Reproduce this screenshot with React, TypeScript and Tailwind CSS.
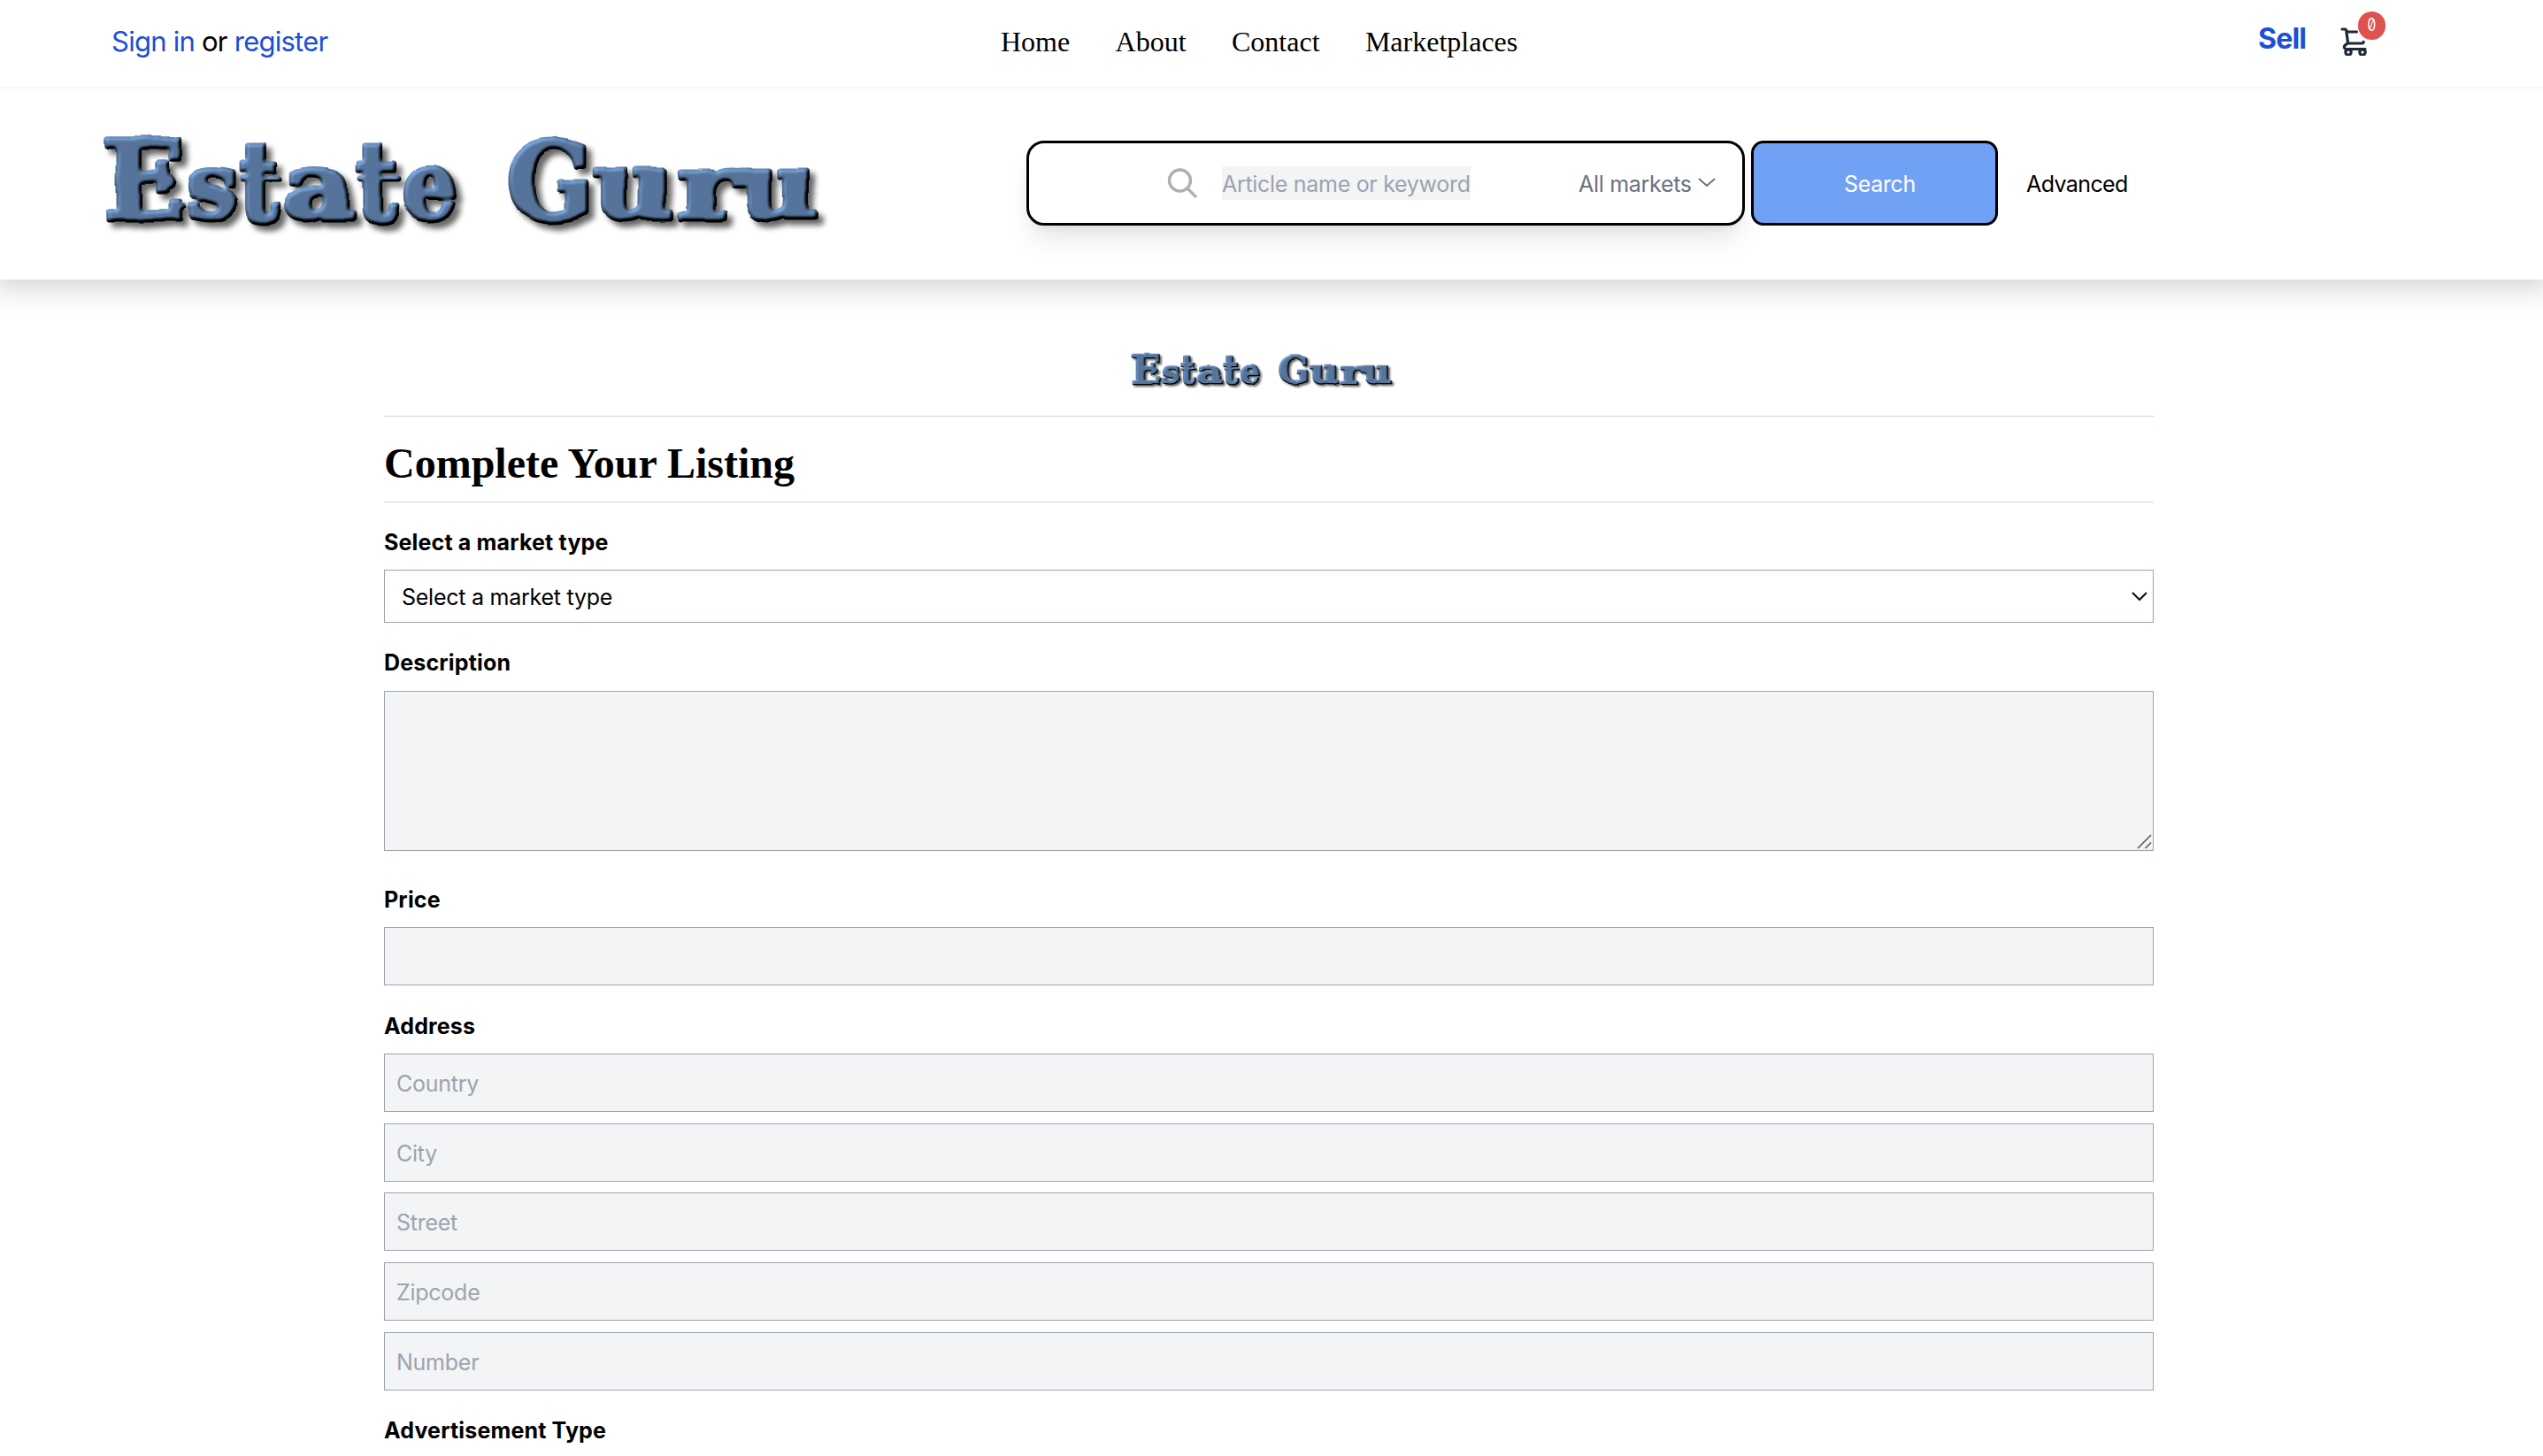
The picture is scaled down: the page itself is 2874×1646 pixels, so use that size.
import React from "react";

type Glyph = { c: string; x: number; y: number; w: number; size: number };

const glyphs: Glyph[] = [
  { c: "E", x: 5, y: 106, w: 92, size: 124 },
  { c: "s", x: 100, y: 105, w: 57, size: 101 },
  { c: "t", x: 158, y: 107, w: 46, size: 124 },
  { c: "a", x: 209, y: 105, w: 80, size: 101 },
  { c: "t", x: 290, y: 107, w: 48, size: 124 },
  { c: "e", x: 343, y: 105, w: 62, size: 103 },
  { c: "G", x: 461, y: 105, w: 98, size: 118 },
  { c: "u", x: 559, y: 105, w: 91, size: 103 },
  { c: "r", x: 654, y: 106, w: 72, size: 103 },
  { c: "u", x: 723, y: 105, w: 88, size: 103 },
];

function Logo({ id, className }: { id: string; className: string }) {
  return (
    <svg className={`overflow-visible ${className}`} viewBox="0 0 824 124" preserveAspectRatio="none" role="img" aria-label="Estate Guru">
      <defs>
        <filter id={id} x="-2%" y="-10%" width="104%" height="125%" colorInterpolationFilters="sRGB">
          <feTurbulence type="fractalNoise" baseFrequency="0.03" numOctaves={1} seed={4} result="noise" />
          <feDisplacementMap in="SourceGraphic" in2="noise" scale={8} xChannelSelector="R" yChannelSelector="G" result="rough" />
          <feColorMatrix in="rough" type="matrix" values="0 0 0 0 0  0 0 0 0 0  0 0 0 0 0  0 0 0 1 0" result="shape" />
          <feGaussianBlur in="shape" stdDeviation="2.2" result="height" />
          <feDiffuseLighting in="height" surfaceScale={6} diffuseConstant={1.15} lightingColor="#6a8fbe" result="light">
            <feDistantLight azimuth={235} elevation={45} />
          </feDiffuseLighting>
          <feComposite in="light" in2="shape" operator="in" result="face" />
          <feGaussianBlur in="shape" stdDeviation="3" result="soft" />
          <feOffset in="soft" dx={6} dy={6} result="drop" />
          <feComponentTransfer in="drop" result="shade">
            <feFuncA type="linear" slope={0.6} />
          </feComponentTransfer>
          <feMerge>
            <feMergeNode in="shade" />
            <feMergeNode in="face" />
          </feMerge>
        </filter>
      </defs>
      <g filter={`url(#${id})`} strokeWidth={7} strokeLinejoin="round" strokeLinecap="round" className="fill-[#57779f] stroke-[#57779f]">
        <text className="font-['DejaVu_Serif',serif] font-bold">
          {glyphs.map((g, i) => (
            <tspan key={i} x={g.x} y={g.y} fontSize={g.size} textLength={g.w} lengthAdjust="spacingAndGlyphs">
              {g.c}
            </tspan>
          ))}
        </text>
        <circle cx="77" cy="64" r="5" />
        <path d="M84 104L96 90M162 60H204M296 60H338" />
      </g>
    </svg>
  );
}

function CartIcon() {
  return (
    <svg className="h-8 w-8" viewBox="0 0 32 32" fill="none" stroke="#1f2937" strokeWidth={3.2} strokeLinecap="round" strokeLinejoin="round">
      <path d="M2 2h3c1 0 1.600.6 1.700 1.500L8.500 17.500L5 20.500c-1.500 1.500-.6 4 1.500 4H28" />
      <path d="M7.500 5H18.500M8.500 18H24.500c1 0 1.600-.5 1.700-1.600" />
      <circle cx="9" cy="28" r="3.200" />
      <circle cx="25" cy="28" r="3.200" />
    </svg>
  );
}

function Label({ children, className }: { children: React.ReactNode; className: string }) {
  return <label className={`block h-10 text-[25px] leading-10 font-bold tracking-[0.16px] ${className}`}>{children}</label>;
}

const fields = ["Country", "City", "Street", "Zipcode", "Number"];

export default function App() {
  return (
    <div className="h-[1646px] w-full overflow-hidden bg-white font-[Inter,sans-serif] text-black">
      <header className="h-[316px] bg-white shadow-[0_0_30px_10px_rgba(0,0,0,0.17)]">
        <div className="flex h-[100px] border-b-2 border-[#f5f5f5]">
          <div className="ml-[126px] h-[94px] w-[1005px] text-[31px] leading-[94px] tracking-[-0.75px]">
            <a className="text-[#1d4ed8]">Sign in</a> or <a className="text-[#1d4ed8]">register</a>
          </div>
          <nav className="flex w-[1421px] gap-[51.4px] font-['Liberation_Serif',serif] text-[32px] leading-[95px]">
            <a>Home</a>
            <a>About</a>
            <a>Contact</a>
            <a>Marketplaces</a>
          </nav>
          <a className="w-[93px] text-[32px] leading-[87px] font-bold tracking-[-0.8px] text-[#1d4ed8]">Sell</a>
          <div className="relative h-16 w-16 pt-[31px]">
            <CartIcon />
            <span className="absolute top-[13px] left-5 flex h-8 w-[31px] items-center justify-center rounded-full bg-[#e0524d] pb-[2px] text-[20px] text-white [font-feature-settings:'zero']">
              <span className="scale-x-80">0</span>
            </span>
          </div>
        </div>
        <div className="flex h-[214px] pt-[42px]">
          <Logo id="logo-large" className="ml-[112px] h-[124px] w-[824px]" />
          <div className="mt-[17px] ml-[224px] flex h-24 w-[812px] items-center rounded-[20px] border-3 border-black bg-white shadow-[0_20px_30px_-6px_rgba(0,0,0,0.1),0_8px_12px_-8px_rgba(0,0,0,0.1)]">
            <svg className="ml-[156px] h-9 w-9" viewBox="0 0 36 36" fill="none" stroke="#b0b0b0" strokeWidth={3.4}>
              <circle cx="14.500" cy="15" r="12" />
              <path d="M23 24L33 34" />
            </svg>
            <span className="ml-[26px] h-[38px] w-[281px] bg-gray-100 text-[25px] leading-[41px] tracking-[-0.3px] whitespace-nowrap text-[#9ca3af]">
              Article name or keyword
            </span>
            <span className="ml-[122px] h-[38px] w-[135px] text-[25px] leading-[41px] tracking-[-0.3px] whitespace-nowrap text-gray-500">All markets</span>
            <svg className="h-5 w-5" viewBox="0 0 20 20" fill="none" stroke="#6b7280" strokeWidth={2}>
              <path d="M1 5L10 13L19 5" />
            </svg>
          </div>
          <button className="mt-[17px] ml-[7px] h-24 w-[279px] rounded-[14px] border-3 border-black bg-[#71a1f5] pt-[3px] pl-3 text-[25px] tracking-[-0.3px] text-white">
            Search
          </button>
          <a className="mt-[17px] ml-8 text-[25px] leading-[98px] tracking-[-0.6px]">Advanced</a>
        </div>
      </header>

      <main className="ml-[434px] w-[2000px]">
        <div className="flex h-[155px] border-b border-gray-300 pt-[80px]">
          <Logo id="logo-small" className="ml-[843px] h-[44px] w-[300px]" />
        </div>
        <h1 className="h-[97px] border-b border-gray-300 font-['Liberation_Serif',serif] text-[48px] leading-[105px] font-bold">
          Complete Your Listing
        </h1>
        <Label className="mt-[25px]">Select a market type</Label>
        <div className="mt-[11px] flex h-[60px] items-center justify-between border border-[#9ca3af] pr-[5px] pl-[19px] text-[25px] tracking-[-0.25px]">
          <span className="pt-[3px]">Select a market type</span>
          <svg className="h-5 w-5" viewBox="0 0 20 20" fill="none" stroke="#111111" strokeWidth={2.200}>
            <path d="M2 6L10 14L18 6" />
          </svg>
        </div>
        <Label className="mt-[25px]">Description</Label>
        <div className="mt-3 flex h-[181px] items-end justify-end border border-[#9ca3af] bg-gray-100">
          <svg className="h-5 w-5" viewBox="0 0 20 20" fill="none" stroke="#555555" strokeWidth={1.500}>
            <path d="M3 18L18 3M11.500 18L18 11.500" />
          </svg>
        </div>
        <Label className="mt-[35px]">Price</Label>
        <div className="mt-[11px] h-[66px] border border-[#9ca3af] bg-gray-100" />
        <Label className="mt-[26px]">Address</Label>
        <div className="mt-[11px] flex flex-col gap-[12.7px]">
          {fields.map((f) => (
            <div key={f} className="h-[66px] border border-[#9ca3af] bg-gray-100 pl-[13px] text-[25px] leading-[66px] tracking-[-0.25px] text-[#9ca3af]">
              {f}
            </div>
          ))}
        </div>
        <Label className="mt-[25.2px]">Advertisement Type</Label>
      </main>
    </div>
  );
}
